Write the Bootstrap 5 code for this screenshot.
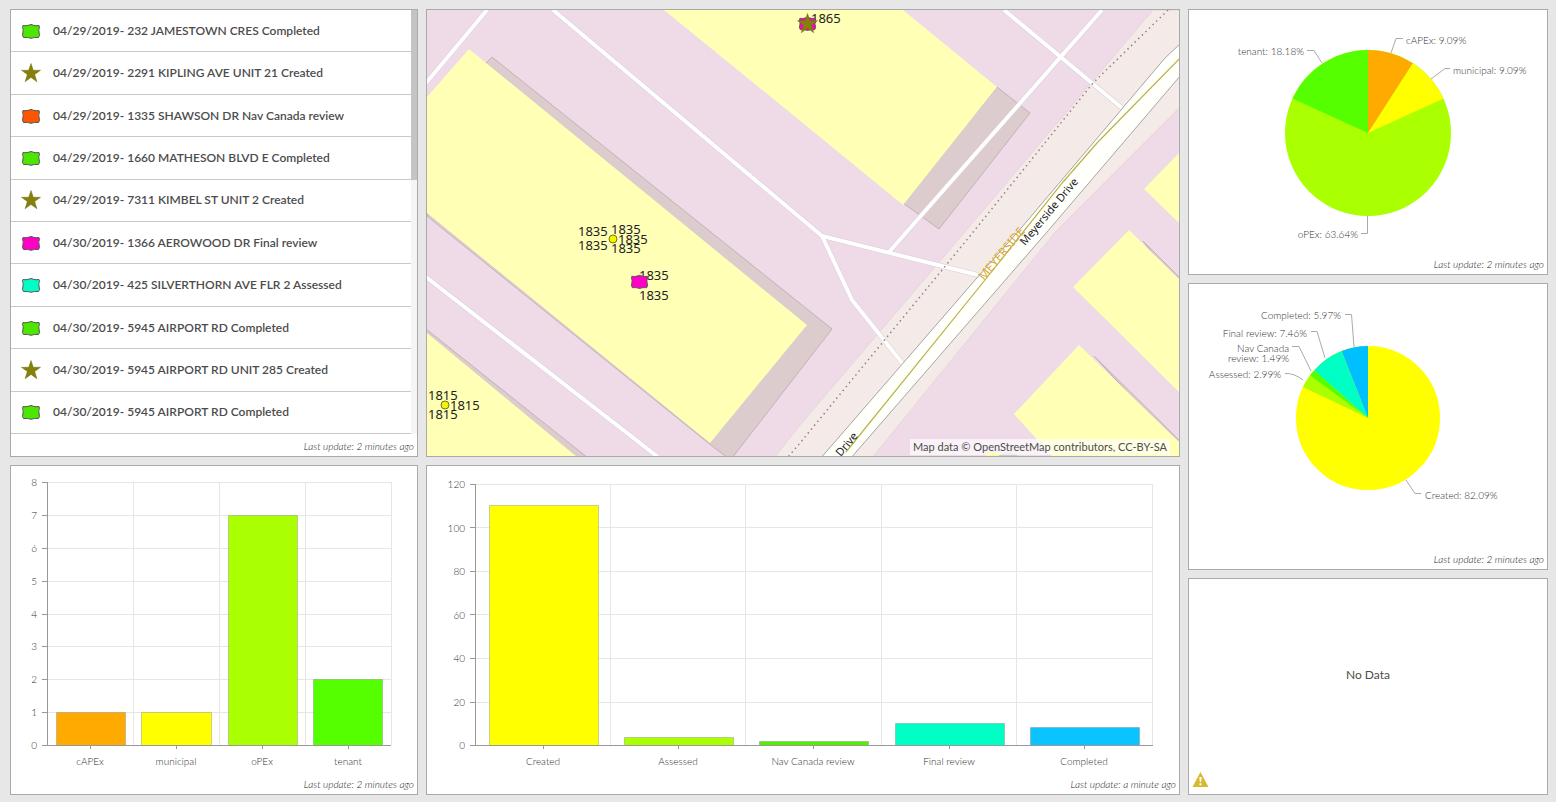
<!DOCTYPE html>
<html lang="en">
<head>
<meta charset="utf-8">
<meta name="viewport" content="width=device-width, initial-scale=1">
<title>Work order dashboard</title>
<link href="https://cdn.jsdelivr.net/npm/bootstrap@5.3.0/dist/css/bootstrap.min.css" rel="stylesheet">
<style>
  body { background: #e7e7e7; color: #4c4c4c; font-family: Lato, "Open Sans", sans-serif; font-size: 12px; line-height: 16px; }
  .dashboard { display: grid; grid-template-columns: 408fr 754fr 360fr; gap: 8px; height: 100vh; min-height: 600px; padding: 9px 8px 7px 10px; }
  .stack { display: grid; gap: 8px; min-width: 0; min-height: 0; }
  .stack-two { grid-template-rows: 448fr 330fr; }
  .stack-three { grid-template-rows: 266fr 287fr 217fr; }
  .panel { background: #fff; border: 1px solid #aaa; display: flex; flex-direction: column; min-width: 0; min-height: 0; position: relative; overflow: hidden; }
  .plot { flex: 1 1 0; min-height: 0; width: 100%; display: block; }
  .updated { height: 22px; line-height: 24px; padding-right: 3px; font-size: 10px; font-weight: 300; font-style: italic; color: #222; text-align: right; flex: none; }
  .orders { min-height: 0; }
  .orders .list-group-item { display: flex; align-items: center; flex: 1 1 0; gap: 12px; padding: 0 10px; border: 0; border-bottom: 1px solid #c8c8c8; color: #4c4c4c; font-weight: 600; white-space: nowrap; }
  .orders svg { width: 20px; height: 20px; flex: none; }
  .track { width: 6px; background: #f5f5f5; }
  .thumb { height: 40%; background: #c4c4c4; }
  .plot text { font-size: 10px; font-weight: 300; fill: #333; }
  .grid-lines { stroke: #e6e6e6; fill: none; }
  .axis-lines { stroke: #999; fill: none; }
  .leaders { stroke: #aaa; fill: none; }
  .pie circle { fill: none; }
  .map-view .map-number { font: 13px "Noto Sans", sans-serif; fill: #222; }
  .map-view .street { font: 11px "Noto Sans", sans-serif; fill: #222; }
  .map-view .district { font: 12px "Noto Sans", sans-serif; fill: #d9a92b; }
  .lane-edge { stroke: #d9cdd8; stroke-width: 5; fill: none; }
  .lane { stroke: #fff; stroke-width: 4; fill: none; }
  .attribution { position: absolute; right: 9px; bottom: 1px; padding: 0 3px; font-size: 11px; background: rgba(255,255,255,.65); }
  .no-data { font-size: 12px; }
  .warning { position: absolute; left: 3px; bottom: 6px; width: 17px; height: 17px; }
</style>
</head>
<body>
<svg width="0" height="0" class="position-absolute" aria-hidden="true">
  <symbol id="shield" viewBox="0 0 20 20"><path d="M2 4.500L5 4.800Q7 4.500 10 3.500Q13 4.500 15 4.800L18 4.500L18.500 6.500Q17.300 8.500 18 11L18.500 14.500L17.500 16.500Q13.500 16 10 17.300Q6.500 16 2.500 16.500L1.500 14.500L2 11Q2.700 8.500 1.500 6.500Z" stroke="#555" stroke-width="1"/></symbol>
  <symbol id="star" viewBox="0 0 20 20"><path d="M10 .5L12.300 7.300H19.500L13.700 11.600L15.900 18.700L10 14.400L4.100 18.700L6.300 11.600L.5 7.300H7.700Z" fill="#857f0c" stroke="#76720c" stroke-width=".5"/></symbol>
</svg>

<main class="dashboard">
  <div class="stack stack-two">
    <section class="panel" aria-label="Work orders">
      <div class="d-flex flex-fill orders">
        <ul class="list-group rounded-0 flex-fill">
          <li class="list-group-item"><svg fill="#4ce600"><use href="#shield"/></svg>04/29/2019- 232 JAMESTOWN CRES Completed</li>
          <li class="list-group-item"><svg><use href="#star"/></svg>04/29/2019- 2291 KIPLING AVE UNIT 21 Created</li>
          <li class="list-group-item"><svg fill="#ff5500"><use href="#shield"/></svg>04/29/2019- 1335 SHAWSON DR Nav Canada review</li>
          <li class="list-group-item"><svg fill="#4ce600"><use href="#shield"/></svg>04/29/2019- 1660 MATHESON BLVD E Completed</li>
          <li class="list-group-item"><svg><use href="#star"/></svg>04/29/2019- 7311 KIMBEL ST UNIT 2 Created</li>
          <li class="list-group-item"><svg fill="#ff00c5"><use href="#shield"/></svg>04/30/2019- 1366 AEROWOOD DR Final review</li>
          <li class="list-group-item"><svg fill="#00ffc5"><use href="#shield"/></svg>04/30/2019- 425 SILVERTHORN AVE FLR 2 Assessed</li>
          <li class="list-group-item"><svg fill="#4ce600"><use href="#shield"/></svg>04/30/2019- 5945 AIRPORT RD Completed</li>
          <li class="list-group-item"><svg><use href="#star"/></svg>04/30/2019- 5945 AIRPORT RD UNIT 285 Created</li>
          <li class="list-group-item"><svg fill="#4ce600"><use href="#shield"/></svg>04/30/2019- 5945 AIRPORT RD Completed</li>
        </ul>
        <div class="track"><div class="thumb"></div></div>
      </div>
      <div class="updated">Last update: 2 minutes ago</div>
    </section>

    <section class="panel" aria-label="Orders by type">
      <svg class="plot" viewBox="11 466 406 306">
        <path class="grid-lines" d="M47 482.500H391M47 515.500H391M47 548.500H391M47 581.500H391M47 614.500H391M47 646.500H391M47 679.500H391M47 712.500H391M133.500 482V745M219.500 482V745M305.500 482V745M391.500 482V745"/>
        <g stroke-opacity=".35" stroke="#777">
          <path fill="#ffaa00" d="M56.500 745V712.500H125.500V745"/>
          <path fill="#ffff00" d="M141.500 745V712.500H211.500V745"/>
          <path fill="#aaff00" d="M228.500 745V515.500H297.500V745"/>
          <path fill="#55ff00" d="M313.500 745V679.500H382.500V745"/>
        </g>
        <path class="axis-lines" d="M47.500 482V745M42 745.500H391M42 482.500H47M42 515.500H47M42 548.500H47M42 581.500H47M42 614.500H47M42 646.500H47M42 679.500H47M42 712.500H47M90.500 745V749M176.500 745V749M262.500 745V749M348.500 745V749"/>
        <g text-anchor="end">
          <text x="37" y="486">8</text><text x="37" y="519">7</text><text x="37" y="552">6</text><text x="37" y="585">5</text><text x="37" y="618">4</text><text x="37" y="650">3</text><text x="37" y="683">2</text><text x="37" y="716">1</text><text x="37" y="749">0</text>
        </g>
        <g text-anchor="middle">
          <text x="90" y="765">cAPEx</text><text x="176" y="765">municipal</text><text x="262" y="765">oPEx</text><text x="348" y="765">tenant</text>
        </g>
      </svg>
      <div class="updated">Last update: 2 minutes ago</div>
    </section>
  </div>

  <div class="stack stack-two">
    <section class="panel map-view" aria-label="Map">
      <svg class="plot" viewBox="427 10 752 446" preserveAspectRatio="xMidYMid slice">
        <path fill="#eedbe7" d="M427 10H1179V457H427Z"/>
        <!-- road verge -->
        <path fill="#f4eae7" stroke="#e6d5dc" d="M1153 10H1180V107L1057 230L872 458H774L800 425L958 240Z"/>
        <!-- shaded building footprints -->
        <g fill="#dccccd" stroke="#c3b1b7">
          <path d="M427 216L486 63L492 57L832 329L732 458H728L712 446Z"/>
          <path d="M997 87L1030 113L939 229L903 203Z"/>
          <path d="M426 329L588 458H426Z"/>
          <path d="M1143 241L1180 278V290ZM1094 356L1180 441V450Z"/>
        </g>
        <!-- parcels -->
        <g fill="#ffffb5">
          <path d="M427 97L469 49L807 325L710 443L427 213Z"/>
          <path d="M664 10H903L997 87L903 205L820 137Z"/>
          <path d="M427 333L577 457H427Z"/>
          <path d="M1179 153L1144 189L1179 223Z"/>
          <path d="M1129 230L1073 287L1179 392V279Z"/>
          <path d="M1079 345L1014 414L1053 457H1179V442Z"/>
          <path fill="#ffff73" d="M984 457L988 453H999L1003 457Z"/>
        </g>
        <ellipse cx="1008" cy="457" rx="10" ry="4" fill="#ccc"/>
        <!-- service lanes -->
        <path class="lane-edge" d="M487 10L426 83M553 10L822 236L978 275M822 236L852 300L903 364M1102 10L889 252M1004 10L1122 108M426 277L658 457"/>
        <path class="lane" d="M487 10L426 83M553 10L822 236L978 275M822 236L852 300L903 364M1102 10L889 252M1004 10L1122 108M426 277L658 457"/>
        <path fill="none" stroke="#9b7f80" stroke-width="1.500" stroke-dasharray="1.500 3.500" d="M1168 10L1093 83L970 236L800 443L788 457"/>
        <!-- Meyerside Drive -->
        <path fill="#fffffc" stroke="#a5a5a8" d="M1181 43L1165 58L1022 227L976 279L820 459H850L1047 232L1181 75Z"/>
        <path fill="none" stroke="#b9b342" stroke-width="1.200" d="M1180 58L1097 143L1063 182L985 280L846 452"/>
        <text class="district" transform="translate(984 281) rotate(-50)">MEYERSIDE</text>
        <text class="street" transform="translate(1025 246) rotate(-50)">Meyerside Drive</text>
        <text class="street" transform="translate(835 464) rotate(-50)">e Drive</text>
        <!-- markers -->
        <g>
          <text class="map-number" x="811" y="23">1865</text>
          <text class="map-number" x="578" y="236">1835</text><text class="map-number" x="611" y="234">1835</text>
          <text class="map-number" x="618" y="244">1835</text><text class="map-number" x="578" y="250">1835</text>
          <text class="map-number" x="611" y="253">1835</text><text class="map-number" x="639" y="280">1835</text>
          <text class="map-number" x="639" y="300">1835</text>
          <text class="map-number" x="428" y="400">1815</text><text class="map-number" x="450" y="410">1815</text><text class="map-number" x="428" y="419">1815</text>
        </g>
        <g fill="#f5f500" stroke="#77751d"><circle cx="613" cy="239" r="4"/><circle cx="445" cy="405" r="4"/></g>
        <use href="#shield" x="630" y="272" width="19" height="19" fill="#ff00c5"/>
        <use href="#shield" x="798" y="14" width="19" height="19" fill="#ff00c5"/>
        <use href="#star" x="797" y="13" width="21" height="21"/>
        <path fill="none" stroke="#333" stroke-dasharray="2 2" d="M490 456.500H500"/>
      </svg>
      <div class="attribution">Map data © OpenStreetMap contributors, CC-BY-SA</div>
    </section>

    <section class="panel" aria-label="Orders by status">
      <svg class="plot" viewBox="427 466 752 306">
        <path class="grid-lines" d="M475 484.500H1152M475 527.500H1152M475 571.500H1152M475 614.500H1152M475 658.500H1152M475 702.500H1152M610.500 484V745M745.500 484V745M881.500 484V745M1016.500 484V745M1152.500 484V745"/>
        <g stroke-opacity=".35" stroke="#777">
          <path fill="#ffff00" d="M489.500 745V505.500H598.500V745"/>
          <path fill="#aaff00" d="M624.500 745V737.500H733.500V745"/>
          <path fill="#55f000" d="M759.500 745V741.500H868.500V745"/>
          <path fill="#00ffc5" d="M895.500 745V723.500H1004.500V745"/>
          <path fill="#0bc4ff" d="M1030.500 745V727.500H1139.500V745"/>
        </g>
        <path class="axis-lines" d="M475.500 484V745M470 745.500H1153M470 484.500H475M470 527.500H475M470 571.500H475M470 614.500H475M470 658.500H475M470 702.500H475M543.500 745V749M678.500 745V749M813.500 745V749M949.500 745V749M1084.500 745V749"/>
        <g text-anchor="end">
          <text x="465" y="488">120</text><text x="465" y="532">100</text><text x="465" y="575">80</text><text x="465" y="619">60</text><text x="465" y="662">40</text><text x="465" y="706">20</text><text x="465" y="749">0</text>
        </g>
        <g text-anchor="middle">
          <text x="543" y="765">Created</text><text x="678" y="765">Assessed</text><text x="813" y="765">Nav Canada review</text><text x="949" y="765">Final review</text><text x="1084" y="765">Completed</text>
        </g>
      </svg>
      <div class="updated">Last update: a minute ago</div>
    </section>
  </div>

  <div class="stack stack-three">
    <section class="panel" aria-label="Share by type">
      <svg class="plot" viewBox="1189 10 358 242">
        <g class="pie" transform="rotate(-90 1368 133)" stroke-width="83">
          <circle cx="1368" cy="133" r="41.500" stroke="#aaff00"/>
          <circle cx="1368" cy="133" r="41.500" stroke="#ffaa00" pathLength="11" stroke-dasharray="1 10"/>
          <circle cx="1368" cy="133" r="41.500" stroke="#ffff00" pathLength="11" stroke-dasharray="1 10" stroke-dashoffset="-1"/>
          <circle cx="1368" cy="133" r="41.500" stroke="#55ff00" pathLength="11" stroke-dasharray="2 9" stroke-dashoffset="-9"/>
        </g>
        <path class="leaders" d="M1391 53L1396 38.500H1403M1431 79L1445 68.500H1450M1322 63L1314 50.500H1307M1367.500 216V233.500H1361"/>
        <text x="1406" y="44">cAPEx: 9.09%</text><text x="1453" y="74">municipal: 9.09%</text>
        <text x="1304" y="55" text-anchor="end">tenant: 18.18%</text><text x="1358" y="238" text-anchor="end">oPEx: 63.64%</text>
      </svg>
      <div class="updated">Last update: 2 minutes ago</div>
    </section>

    <section class="panel" aria-label="Share by status">
      <svg class="plot" viewBox="1189 284 358 263">
        <g class="pie" transform="rotate(-90 1368 418)" stroke-width="72">
          <circle cx="1368" cy="418" r="36" stroke="#ffff00"/>
          <circle cx="1368" cy="418" r="36" stroke="#aaff00" pathLength="134" stroke-dasharray="4 130" stroke-dashoffset="-110"/>
          <circle cx="1368" cy="418" r="36" stroke="#55ff00" pathLength="134" stroke-dasharray="2 132" stroke-dashoffset="-114"/>
          <circle cx="1368" cy="418" r="36" stroke="#00ffc5" pathLength="134" stroke-dasharray="10 124" stroke-dashoffset="-116"/>
          <circle cx="1368" cy="418" r="36" stroke="#00bfff" pathLength="134" stroke-dasharray="8 126" stroke-dashoffset="-126"/>
        </g>
        <path class="leaders" d="M1354 347L1351.500 314.500H1345M1325 358L1317 331.500H1311M1311 371L1299 346.500H1292M1303 380Q1294 373 1285 373.500M1406 480L1415 493.500H1421"/>
        <g text-anchor="end">
          <text x="1341" y="319">Completed: 5.97%</text><text x="1307" y="337">Final review: 7.46%</text>
          <text x="1289" y="352">Nav Canada</text><text x="1289" y="362">review: 1.49%</text><text x="1281" y="378">Assessed: 2.99%</text>
        </g>
        <text x="1425" y="499">Created: 82.09%</text>
      </svg>
      <div class="updated">Last update: 2 minutes ago</div>
    </section>

    <section class="panel align-items-center" aria-label="Details">
      <p class="no-data my-auto pb-4">No Data</p>
      <svg class="warning" viewBox="0 0 17 17" role="img" aria-label="Warning"><path fill="#d6b92c" d="M8.500 1L16.500 16H.5Z"/><path fill="#fff" d="M7.300 6H9.700L9.200 11H7.800ZM7.500 12.200H9.500V14.200H7.500Z"/></svg>
    </section>
  </div>
</main>
<script src="https://cdn.jsdelivr.net/npm/bootstrap@5.3.0/dist/js/bootstrap.bundle.min.js"></script>
</body>
</html>
